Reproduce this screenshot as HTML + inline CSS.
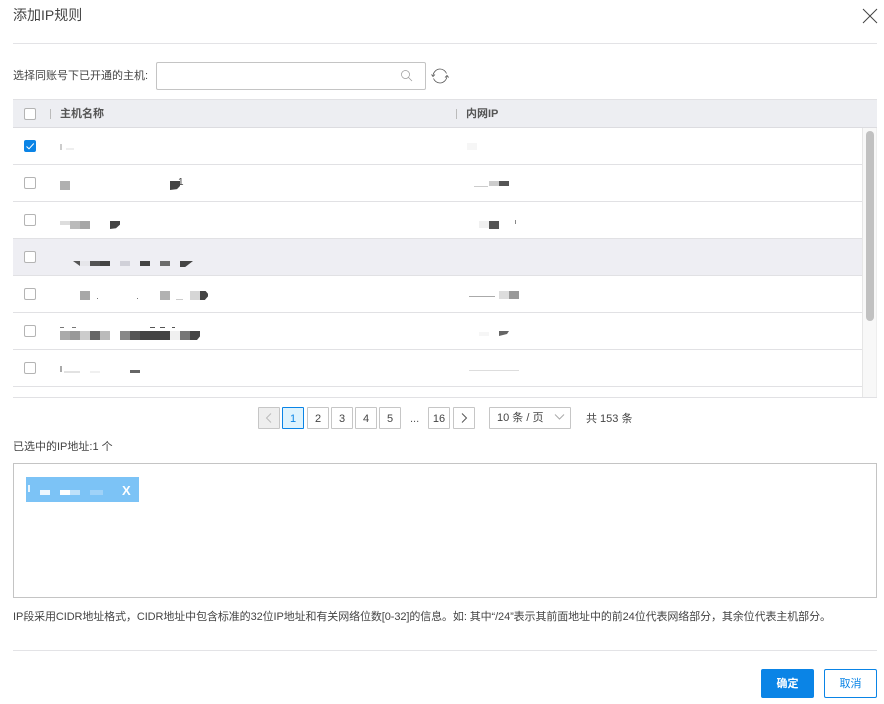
<!DOCTYPE html>
<html lang="zh"><head><meta charset="utf-8"><title>添加IP规则</title>
<style>
html,body{margin:0;padding:0;background:#fff}
#p{position:relative;width:884px;height:704px;overflow:hidden;background:#fff;font-family:"Liberation Sans","Noto Sans CJK SC",sans-serif;font-size:11px;color:#333}
#p div{position:absolute;box-sizing:border-box}
.t{white-space:nowrap;line-height:18px;height:18px}
.l{left:13px;width:864px;height:1px;background:#e3e3e6}
.r{left:13px;width:849px;height:1px;background:#e1e1e4}
.cb{left:24px;width:12px;height:12px;border:1px solid #b4b4b4;border-radius:2px;background:#fff}
.pg{top:407px;height:22px;width:22px;border:1px solid #c6c6c6;border-radius:1px;text-align:center;line-height:22px;color:#444;background:#fff}
</style></head><body><div id="p">
<div class="t" style="left:13px;top:6px;font-size:14px;color:#444">添加IP规则</div>
<svg style="position:absolute;left:862px;top:8px" width="16" height="16" viewBox="0 0 16 16"><path d="M1 1L15 15M15 1L1 15" stroke="#444" stroke-width="1" fill="none"/></svg>
<div class="l" style="top:43px"></div>

<div class="t" style="left:13px;top:67px;color:#444">选择同账号下已开通的主机:</div>
<div style="left:156px;top:62px;width:270px;height:28px;border:1px solid #c4c4c4;border-radius:2px"></div>
<svg style="position:absolute;left:400px;top:69px" width="13" height="13" viewBox="0 0 13 13"><circle cx="5.5" cy="5.5" r="4" fill="none" stroke="#999" stroke-width=".7"/><path d="M8.5 8.5L12 12" stroke="#999" stroke-width=".7"/></svg>
<svg style="position:absolute;left:431px;top:67px" width="18" height="18" viewBox="0 0 18 18"><path d="M2 8.5C2.5 5 5.500 2 9 2C12 2 14.500 4 15.500 6.500M16 9.500C15.500 13 12.500 16 9 16C6 16 3.500 14 2.500 11.500" fill="none" stroke="#555" stroke-width=".8"/><path d="M0.500 7.500L2 9.500L4 7.500M14 10.500L16 8.500L17.700 10.500" fill="none" stroke="#555" stroke-width=".8"/></svg>

<div style="left:13px;top:99px;width:864px;height:29px;background:#edeef2;border-top:1px solid #e1e1e4;border-bottom:1px solid #dcdce0"></div>
<div class="cb" style="top:108px"></div>
<div style="left:50px;top:109px;width:1px;height:10px;background:#bbb"></div>
<div class="t" style="left:60px;top:105px;font-weight:bold;color:#555">主机名称</div>
<div style="left:456px;top:109px;width:1px;height:10px;background:#bbb"></div>
<div class="t" style="left:466px;top:105px;font-weight:bold;color:#555">内网IP</div>

<div style="left:13px;top:239px;width:849px;height:36px;background:#eeeef3"></div>
<div style="left:862px;top:128px;width:15px;height:270px;background:#f8f8f8;border-left:1px solid #e6e6e6;border-right:1px solid #eee"></div>
<div style="left:866px;top:131px;width:8px;height:190px;background:#c1c1c1;border-radius:4px"></div>

<div class="r" style="top:164px"></div><div class="r" style="top:201px"></div><div class="r" style="top:238px"></div><div class="r" style="top:275px"></div><div class="r" style="top:312px"></div><div class="r" style="top:349px"></div><div class="r" style="top:386px"></div>
<div style="left:13px;top:397px;width:864px;height:1px;background:#e1e1e4"></div>

<div style="left:24px;top:140px;width:12px;height:12px;background:#0a84e6;border-radius:2px"></div>
<svg style="position:absolute;left:24px;top:140px" width="12" height="12" viewBox="0 0 12 12"><path d="M2.500 6.500L5 8.800L9.800 3.500" fill="none" stroke="#fff" stroke-width="1"/></svg>
<div class="cb" style="top:177px"></div><div class="cb" style="top:214px"></div><div class="cb" style="top:251px"></div><div class="cb" style="top:288px"></div><div class="cb" style="top:325px"></div><div class="cb" style="top:362px"></div>

<!-- row 1 -->
<div style="left:60px;top:144px;width:2px;height:6px;background:#ccc"></div>
<div style="left:66px;top:148px;width:8px;height:2px;background:#eee"></div>
<!-- row 2 -->
<div style="left:60px;top:181px;width:10px;height:9px;background:#b0b0b0"></div>
<div style="left:170px;top:181px;width:10px;height:9px;background:#444;clip-path:polygon(0 0,100% 0,100% 55%,70% 90%,0 100%)"></div>
<div class="t" style="left:178px;top:174px;font-size:10px;color:#444">1</div>
<!-- row 3 -->
<div style="left:60px;top:221px;width:10px;height:4px;background:#ddd"></div>
<div style="left:70px;top:221px;width:10px;height:8px;background:#bbb"></div>
<div style="left:80px;top:221px;width:10px;height:8px;background:#a6a6a6"></div>
<div style="left:110px;top:221px;width:10px;height:8px;background:#444;clip-path:polygon(0 0,100% 0,100% 45%,60% 90%,0 100%)"></div>
<!-- row 4 -->
<div style="left:73px;top:261px;width:7px;height:5px;background:#555;clip-path:polygon(0 0,100% 0,100% 100%)"></div>
<div style="left:80px;top:261px;width:10px;height:5px;background:#e6e6ea"></div>
<div style="left:90px;top:261px;width:10px;height:5px;background:#555"></div>
<div style="left:100px;top:261px;width:10px;height:5px;background:#444"></div>
<div style="left:120px;top:261px;width:10px;height:5px;background:#d0d0d8"></div>
<div style="left:140px;top:261px;width:10px;height:5px;background:#444"></div>
<div style="left:160px;top:261px;width:10px;height:5px;background:#6c6c6c"></div>
<div style="left:180px;top:261px;width:13px;height:6px;background:#444;clip-path:polygon(0 0,100% 0,40% 100%,0 100%)"></div>
<!-- row 5 -->
<div style="left:80px;top:291px;width:10px;height:9px;background:#a8a8a8"></div>
<div style="left:97px;top:298px;width:1px;height:1px;background:#777"></div>
<div style="left:137px;top:298px;width:1px;height:1px;background:#777"></div>
<div style="left:160px;top:291px;width:10px;height:9px;background:#b2b2b2"></div>
<div style="left:176px;top:299px;width:7px;height:1px;background:#ccc"></div>
<div style="left:190px;top:291px;width:10px;height:9px;background:#d6d6d6"></div>
<div style="left:200px;top:291px;width:8px;height:9px;background:#444;clip-path:polygon(0 0,70% 0,100% 30%,100% 60%,60% 100%,0 100%)"></div>
<!-- row 6 -->
<div style="left:60px;top:327px;width:4px;height:1px;background:#777"></div>
<div style="left:72px;top:327px;width:4px;height:1px;background:#777"></div>
<div style="left:150px;top:327px;width:5px;height:1px;background:#555"></div>
<div style="left:160px;top:327px;width:5px;height:1px;background:#555"></div>
<div style="left:172px;top:327px;width:3px;height:1px;background:#555"></div>
<div style="left:60px;top:331px;width:10px;height:9px;background:#aaa"></div>
<div style="left:70px;top:331px;width:10px;height:9px;background:#999"></div>
<div style="left:80px;top:331px;width:10px;height:9px;background:#ccc"></div>
<div style="left:90px;top:331px;width:10px;height:9px;background:#666"></div>
<div style="left:100px;top:331px;width:10px;height:9px;background:#bbb"></div>
<div style="left:120px;top:331px;width:10px;height:9px;background:#888"></div>
<div style="left:130px;top:331px;width:10px;height:9px;background:#555"></div>
<div style="left:140px;top:331px;width:30px;height:9px;background:#444"></div>
<div style="left:170px;top:331px;width:10px;height:9px;background:#f0f0f0"></div>
<div style="left:180px;top:331px;width:10px;height:9px;background:#777"></div>
<div style="left:190px;top:331px;width:10px;height:9px;background:#444;clip-path:polygon(0 0,100% 0,100% 60%,70% 100%,0 100%)"></div>
<!-- row 7 -->
<div style="left:60px;top:366px;width:2px;height:6px;background:#aaa"></div>
<div style="left:64px;top:371px;width:16px;height:2px;background:#e2e2e2"></div>
<div style="left:90px;top:371px;width:10px;height:2px;background:#f0f0f0"></div>
<div style="left:130px;top:370px;width:10px;height:3px;background:#666"></div>

<!-- IP column -->
<div style="left:467px;top:143px;width:10px;height:7px;background:#f6f6f6"></div>
<div style="left:474px;top:186px;width:14px;height:1px;background:#ccc"></div>
<div style="left:489px;top:181px;width:10px;height:5px;background:#ccc"></div>
<div style="left:499px;top:181px;width:10px;height:5px;background:#555"></div>
<div style="left:479px;top:221px;width:10px;height:7px;background:#f0f0f0"></div>
<div style="left:489px;top:221px;width:10px;height:8px;background:#555"></div>
<div style="left:515px;top:220px;width:1px;height:4px;background:#888"></div>
<div style="left:469px;top:296px;width:26px;height:1px;background:#aaa"></div>
<div style="left:499px;top:291px;width:10px;height:8px;background:#ddd"></div>
<div style="left:509px;top:291px;width:10px;height:8px;background:#999"></div>
<div style="left:479px;top:332px;width:10px;height:4px;background:#f6f6f6"></div>
<div style="left:499px;top:331px;width:10px;height:5px;background:#666;clip-path:polygon(0 0,100% 0,80% 60%,0 100%)"></div>
<div style="left:469px;top:370px;width:50px;height:1px;background:#ddd"></div>

<!-- pagination -->
<div class="pg" style="left:258px;background:#eee"></div>
<svg style="position:absolute;left:265px;top:413px" width="8" height="10" viewBox="0 0 8 10"><path d="M6 0.500L1.500 5L6 9.500" fill="none" stroke="#bbb"/></svg>
<div class="pg" style="left:282px;background:#def3fd;border-color:#0a84e6;color:#0a84e6">1</div>
<div class="pg" style="left:307px">2</div>
<div class="pg" style="left:331px">3</div>
<div class="pg" style="left:355px">4</div>
<div class="pg" style="left:379px">5</div>
<div class="t" style="left:410px;top:410px;color:#555">...</div>
<div class="pg" style="left:428px">16</div>
<div class="pg" style="left:453px"></div>
<svg style="position:absolute;left:460px;top:413px" width="8" height="10" viewBox="0 0 8 10"><path d="M2 0.500L6.500 5L2 9.500" fill="none" stroke="#555"/></svg>
<div style="left:489px;top:407px;width:82px;height:22px;border:1px solid #c6c6c6;border-radius:1px"></div>
<div class="t" style="left:497px;top:409px;color:#444">10 条 / 页</div>
<svg style="position:absolute;left:554px;top:414px" width="11" height="6" viewBox="0 0 11 6"><path d="M1 0.500L5.500 5L10 0.500" fill="none" stroke="#aaa"/></svg>
<div class="t" style="left:586px;top:410px;color:#444">共 153 条</div>

<div class="t" style="left:13px;top:438px;color:#444">已选中的IP地址:1 个</div>
<div style="left:13px;top:463px;width:864px;height:135px;border:1px solid #c4c4c4"></div>
<div style="left:26px;top:477px;width:113px;height:25px;background:#7cc3f6"></div>
<div style="left:28px;top:485px;width:2px;height:7px;background:#e8f4fd"></div>
<div style="left:40px;top:490px;width:10px;height:5px;background:#eef7fe"></div>
<div style="left:60px;top:490px;width:10px;height:5px;background:#fff"></div>
<div style="left:70px;top:490px;width:10px;height:5px;background:#bfe1fa"></div>
<div style="left:90px;top:490px;width:13px;height:5px;background:#9fd2f8"></div>
<div class="t" style="left:122px;top:482px;color:#fff;font-weight:bold;font-size:13px">X</div>

<div class="t" style="left:13px;top:608px;color:#444;letter-spacing:-.1px">IP段采用CIDR地址格式&#65292;CIDR地址中包含标准的32位IP地址和有关网络位数[0-32]的信息。如: 其中“/24”表示其前面地址中的前24位代表网络部分&#65292;其余位代表主机部分。</div>
<div class="l" style="top:650px"></div>
<div class="t" style="left:761px;top:669px;width:53px;height:29px;line-height:30px;background:#0a84e6;color:#fff;text-align:center;border-radius:2px;font-weight:bold">确定</div>
<div class="t" style="left:824px;top:669px;width:53px;height:29px;line-height:28px;border:1px solid #0a84e6;color:#0a84e6;text-align:center;border-radius:2px;background:#fff">取消</div>
</div></body></html>
